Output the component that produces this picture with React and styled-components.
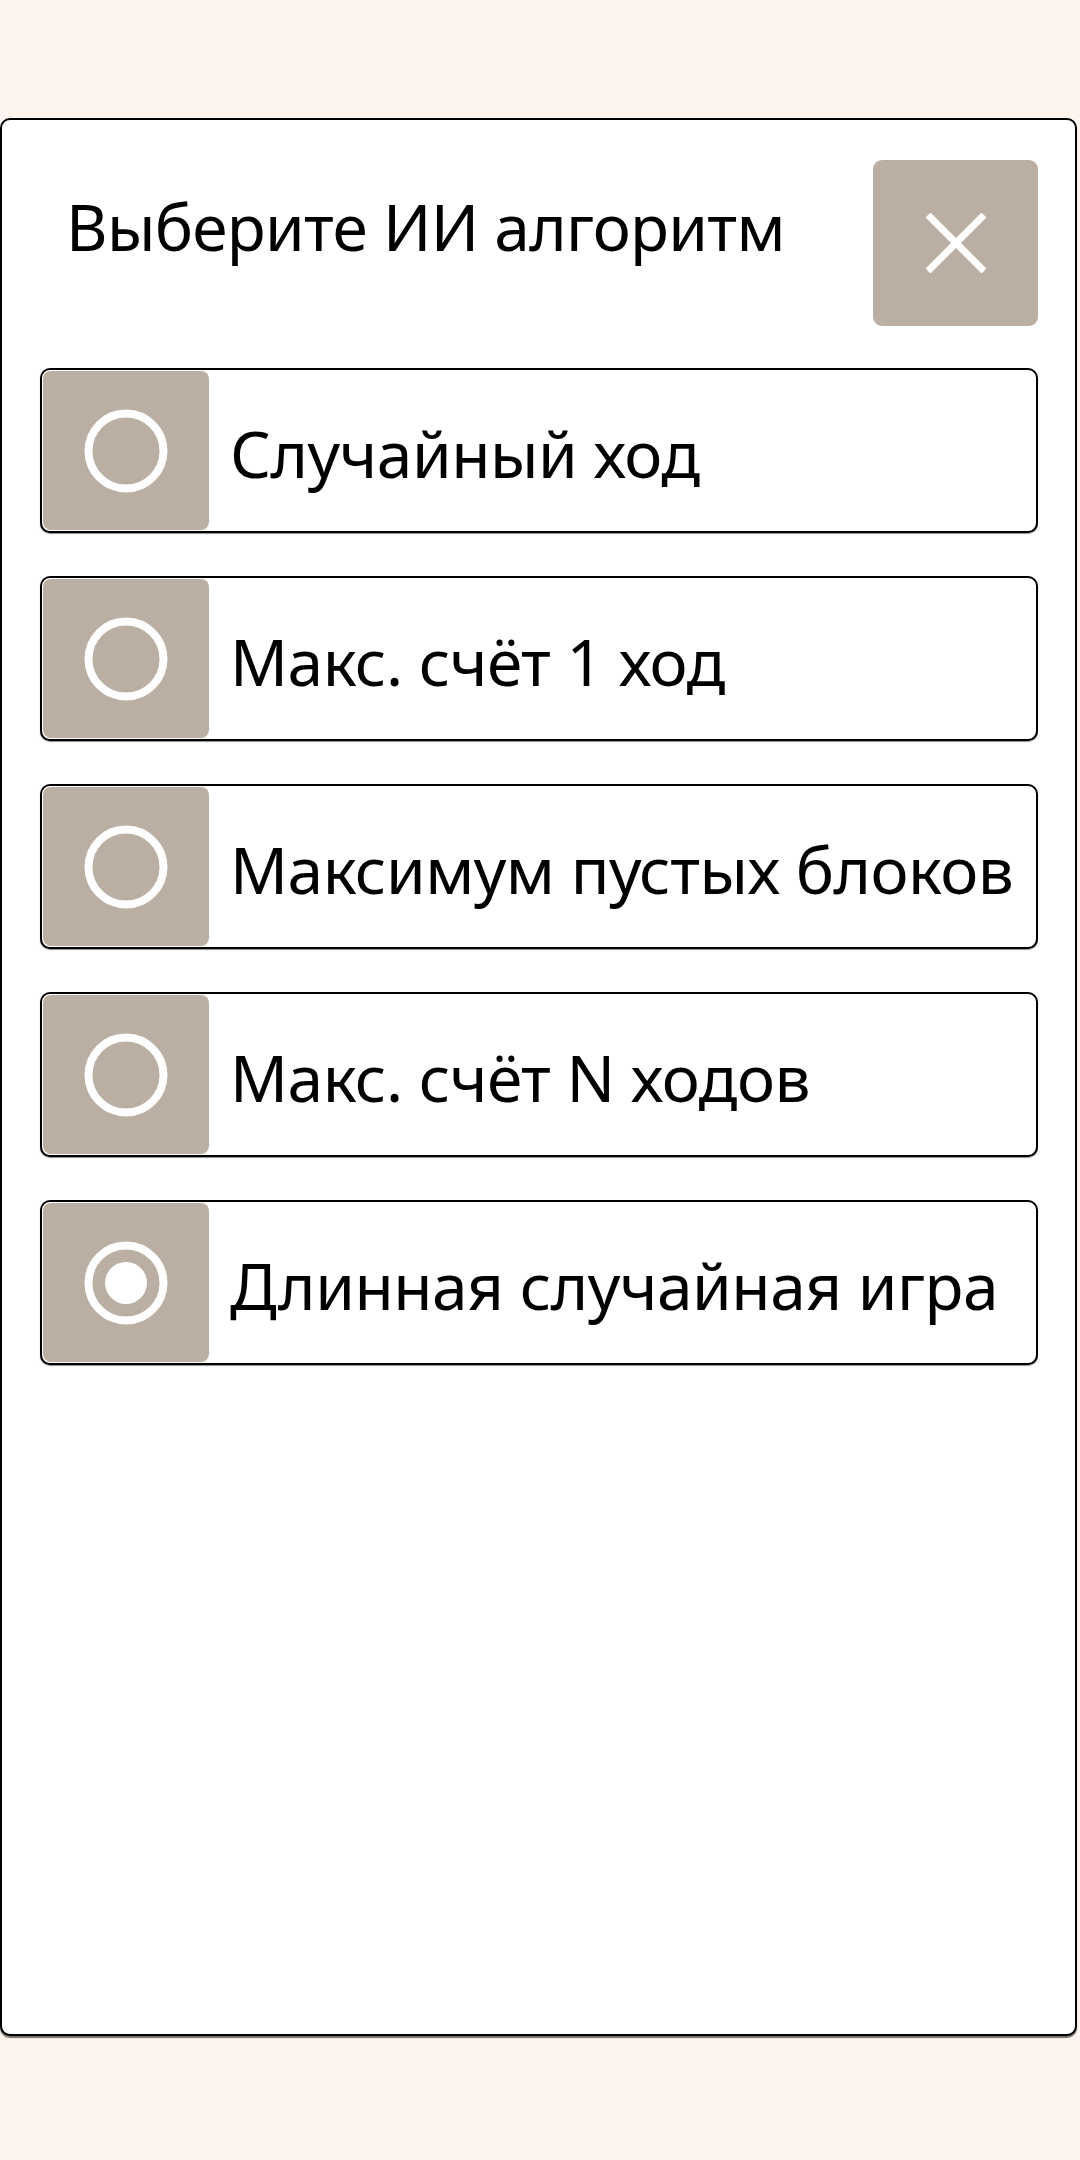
import React, { useState } from 'react';
import styled, { createGlobalStyle } from 'styled-components';

const GlobalStyle = createGlobalStyle`
  html, body {
    margin: 0;
    padding: 0;
    background-color: #fdf4ee;
  }
  body {
    font-family: 'Noto Sans', 'DejaVu Sans', sans-serif;
    color: #000;
  }
  * {
    box-sizing: border-box;
  }
`;

const Page = styled.div`
  width: 1080px;
  height: 2160px;
  padding-top: 118px;
  background-color: #fdf4ee;
`;

const Dialog = styled.div`
  width: 1077px;
  height: 1918px;
  background-color: #fff;
  border: 2px solid #000;
  border-radius: 10px;
  box-shadow: 0 2px 1px rgba(0, 0, 0, 0.55);
  padding: 40px 37px 40px 38px;
  display: flex;
  flex-direction: column;
`;

const Header = styled.div`
  display: flex;
  justify-content: space-between;
  align-items: flex-start;
  margin-bottom: 42px;
`;

const Title = styled.h1`
  margin: 0;
  padding: 23px 0 0 26px;
  font-size: 64px;
  font-weight: 400;
  letter-spacing: -0.7px;
  line-height: 87px;
`;

const CloseButton = styled.button`
  width: 165px;
  height: 166px;
  border: none;
  border-radius: 9px;
  background-color: #baafa2;
  display: flex;
  align-items: center;
  justify-content: center;
  padding: 0;
  cursor: pointer;
`;

const List = styled.div`
  display: flex;
  flex-direction: column;
  gap: 43px;
`;

const Option = styled.div`
  height: 165px;
  border: 2px solid #000;
  border-radius: 10px;
  box-shadow: 0 1px 1px rgba(0, 0, 0, 0.45);
  padding: 1px;
  display: flex;
  align-items: center;
  cursor: pointer;
  background-color: #fff;
`;

const RadioBox = styled.div`
  width: 166px;
  height: 100%;
  flex-shrink: 0;
  border-radius: 8px;
  background-color: #baafa2;
  display: flex;
  align-items: center;
  justify-content: center;
`;

const Label = styled.span`
  margin-left: 21px;
  font-size: 64px;
  letter-spacing: -0.5px;
  line-height: 87px;
  padding-top: 6px;
  white-space: nowrap;
`;

const Radio = ({ checked }) => (
  <svg width="84" height="84" viewBox="0 0 84 84">
    <circle cx="42" cy="42" r="37.5" fill="none" stroke="#fff" strokeWidth="8" />
    {checked && <circle cx="42" cy="42" r="21" fill="#fff" />}
  </svg>
);

const CloseIcon = () => (
  <svg width="60" height="60" viewBox="0 0 60 60">
    <path d="M2 2 L58 58 M58 2 L2 58" stroke="#fff" strokeWidth="7" fill="none" />
  </svg>
);

const algorithms = [
  'Случайный ход',
  'Макс. счёт 1 ход',
  'Максимум пустых блоков',
  'Макс. счёт N ходов',
  'Длинная случайная игра',
];

const App = () => {
  const [selected, setSelected] = useState(4);

  return (
    <Page>
      <GlobalStyle />
      <Dialog>
        <Header>
          <Title>Выберите ИИ алгоритм</Title>
          <CloseButton aria-label="Закрыть">
            <CloseIcon />
          </CloseButton>
        </Header>
        <List>
          {algorithms.map((name, i) => (
            <Option key={name} onClick={() => setSelected(i)}>
              <RadioBox>
                <Radio checked={selected === i} />
              </RadioBox>
              <Label>{name}</Label>
            </Option>
          ))}
        </List>
      </Dialog>
    </Page>
  );
};

export default App;
